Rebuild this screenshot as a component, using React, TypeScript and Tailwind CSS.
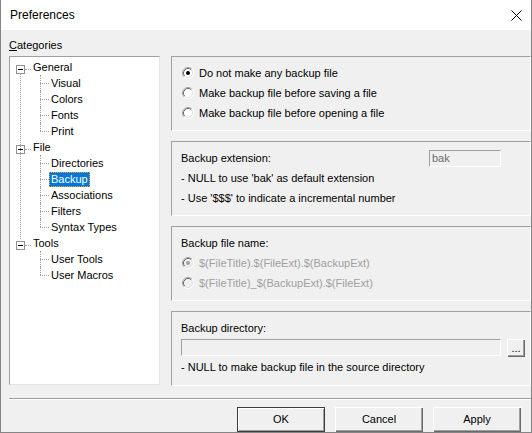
import React from 'react'

const tree = [
  { label: 'General', children: ['Visual', 'Colors', 'Fonts', 'Print'] },
  { label: 'File', children: ['Directories', 'Backup', 'Associations', 'Filters', 'Syntax Types'] },
  { label: 'Tools', children: ['User Tools', 'User Macros'] },
]

function Radio({ checked, disabled }: { checked?: boolean; disabled?: boolean }) {
  return (
    <svg width="12" height="12" viewBox="0 0 12 12" className="shrink-0">
      <circle cx="6" cy="6" r="5" fill={disabled ? '#f0f0f0' : '#ffffff'} />
      <path d="M2.11 9.89 A5.5 5.5 0 0 1 9.89 2.11" fill="none" stroke="#a0a0a0" strokeWidth="1" />
      <path d="M2.82 9.18 A4.5 4.5 0 0 1 9.18 2.82" fill="none" stroke="#696969" strokeWidth="1" />
      <path d="M9.89 2.11 A5.5 5.5 0 0 1 2.11 9.89" fill="none" stroke="#ffffff" strokeWidth="1" />
      <path d="M9.18 2.82 A4.5 4.5 0 0 1 2.82 9.18" fill="none" stroke="#e3e3e3" strokeWidth="1" />
      {checked && <circle cx="6" cy="6" r="2" fill={disabled ? '#a0a0a0' : '#000000'} />}
    </svg>
  )
}

function Panel({ children }: { children: React.ReactNode }) {
  return (
    <div className="h-[75px] border border-t-[#a0a0a0] border-l-[#a0a0a0] border-r-white border-b-white pt-[6px]">
      {children}
    </div>
  )
}

function Button({ label, primary }: { label: string; primary?: boolean }) {
  return (
    <div
      className={
        'w-[88px] h-[25px] flex items-center justify-center bg-[#f0f0f0] ' +
        (primary
          ? 'border border-[#3c3c3c] shadow-[inset_1px_1px_#ffffff,inset_-1px_-1px_#a0a0a0]'
          : 'shadow-[inset_1px_1px_#ffffff,inset_-1px_-1px_#696969,inset_-2px_-2px_#a0a0a0]')
      }
    >
      {label}
    </div>
  )
}

export default function App() {
  return (
    <div
      className="w-[532px] h-[433px] overflow-hidden bg-[#f0f0f0] border-x border-b border-[#858585] text-[11px] text-black flex flex-col"
      style={{ fontFamily: '"Liberation Sans", Arial, sans-serif' }}
    >
      {/* title bar */}
      <div className="h-[30px] bg-white flex items-center justify-between pl-[9px] pr-[9px] shrink-0">
        <span className="text-[12px]">Preferences</span>
        <svg width="11" height="11" viewBox="0 0 11 11">
          <path d="M0.5 0.5 L10.5 10.5 M10.5 0.5 L0.5 10.5" stroke="#000" strokeWidth="1" />
        </svg>
      </div>

      <div className="flex flex-col pl-[8px]">
        <div className="pt-[8px] h-[22px] leading-[14px]">
          <span className="underline">C</span>ategories
        </div>

        <div className="mt-[4px] flex gap-[11px]">
          {/* tree view */}
          <div className="w-[151px] h-[329px] bg-white border border-t-[#a0a0a0] border-l-[#a0a0a0] border-r-[#e3e3e3] border-b-[#e3e3e3]">
            <div className="relative pt-[2px]">
              <div className="absolute left-[10px] top-[16px] h-[166px] border-l border-dotted border-[#a0a0a0]" />
              {tree.map((node) => (
                <div key={node.label}>
                  <div className="h-4 flex items-center pl-[6px]">
                    <div className="flex items-center mt-[4px]">
                      <div className="w-[9px] h-[9px] border border-[#919191] bg-white flex items-center justify-center">
                        <div className="w-[5px] h-px bg-black" />
                      </div>
                      <div className="w-[6px] border-t border-dotted border-[#a0a0a0]" />
                    </div>
                    <span className="ml-[2px] leading-[13px]">{node.label}</span>
                  </div>
                  {node.children.map((child, i) => {
                    const last = i === node.children.length - 1
                    const selected = child === 'Backup'
                    return (
                      <div key={child} className="relative h-4 flex items-center pl-[30px]">
                        <div
                          className={
                            'absolute left-[30px] top-0 border-l border-dotted border-[#a0a0a0] ' +
                            (last ? 'h-[8px]' : 'h-4')
                          }
                        />
                        <div className="w-[9px] border-t border-dotted border-[#a0a0a0]" />
                        <span
                          className={
                            'px-[1px] leading-[13px] border ' +
                            (selected
                              ? 'bg-[#0078d7] text-white border-dotted border-[#f5a623]'
                              : 'border-transparent')
                          }
                        >
                          {child}
                        </span>
                      </div>
                    )
                  })}
                </div>
              ))}
            </div>
          </div>

          {/* option panels */}
          <div className="flex-1 flex flex-col gap-[10px]">
            <Panel>
              {[
                ['Do not make any backup file', true],
                ['Make backup file before saving a file', false],
                ['Make backup file before opening a file', false],
              ].map(([text, checked]) => (
                <div key={text as string} className="h-[20px] flex items-center gap-[5px] pl-[10px]">
                  <Radio checked={checked as boolean} />
                  <span>{text}</span>
                </div>
              ))}
            </Panel>

            <Panel>
              <div className="h-[20px] flex items-center justify-between pl-[9px] pr-[29px]">
                <span>Backup extension:</span>
                <div className="w-[72px] h-[17px] border border-t-[#a0a0a0] border-l-[#a0a0a0] border-r-white border-b-white flex items-center pl-[2px] text-[#6d6d6d]">
                  bak
                </div>
              </div>
              <div className="h-[20px] flex items-center pl-[9px]">- NULL to use 'bak' as default extension</div>
              <div className="h-[20px] flex items-center pl-[9px]">- Use '$$$' to indicate a incremental number</div>
            </Panel>

            <Panel>
              <div className="h-[20px] flex items-center pl-[9px]">Backup file name:</div>
              <div className="h-[20px] flex items-center gap-[5px] pl-[10px] text-[#a0a0a0]">
                <Radio checked disabled />
                <span>$(FileTitle).$(FileExt).$(BackupExt)</span>
              </div>
              <div className="h-[20px] flex items-center gap-[5px] pl-[10px] text-[#a0a0a0]">
                <Radio disabled />
                <span>$(FileTitle)_$(BackupExt).$(FileExt)</span>
              </div>
            </Panel>

            <Panel>
              <div className="h-[20px] flex items-center pl-[9px]">Backup directory:</div>
              <div className="h-[19px] flex items-start pt-px pl-[9px]">
                <div className="w-[320px] h-[17px] border border-t-[#a0a0a0] border-l-[#a0a0a0] border-r-white border-b-white" />
                <div className="ml-[6px] w-[18px] h-[18px] flex items-end justify-center pb-[3px] leading-none shadow-[inset_1px_1px_#ffffff,inset_-1px_-1px_#696969,inset_-2px_-2px_#a0a0a0]">
                  ...
                </div>
              </div>
              <div className="h-[20px] flex items-center pl-[9px]">- NULL to make backup file in the source directory</div>
            </Panel>
          </div>
        </div>

        {/* separator */}
        <div className="mt-[12px] h-[2px] border-t border-[#a0a0a0] border-b border-b-white" />

        <div className="mt-[7px] flex justify-end gap-[10px] pr-[10px]">
          <Button label="OK" primary />
          <Button label="Cancel" />
          <Button label="Apply" />
        </div>
      </div>
    </div>
  )
}
